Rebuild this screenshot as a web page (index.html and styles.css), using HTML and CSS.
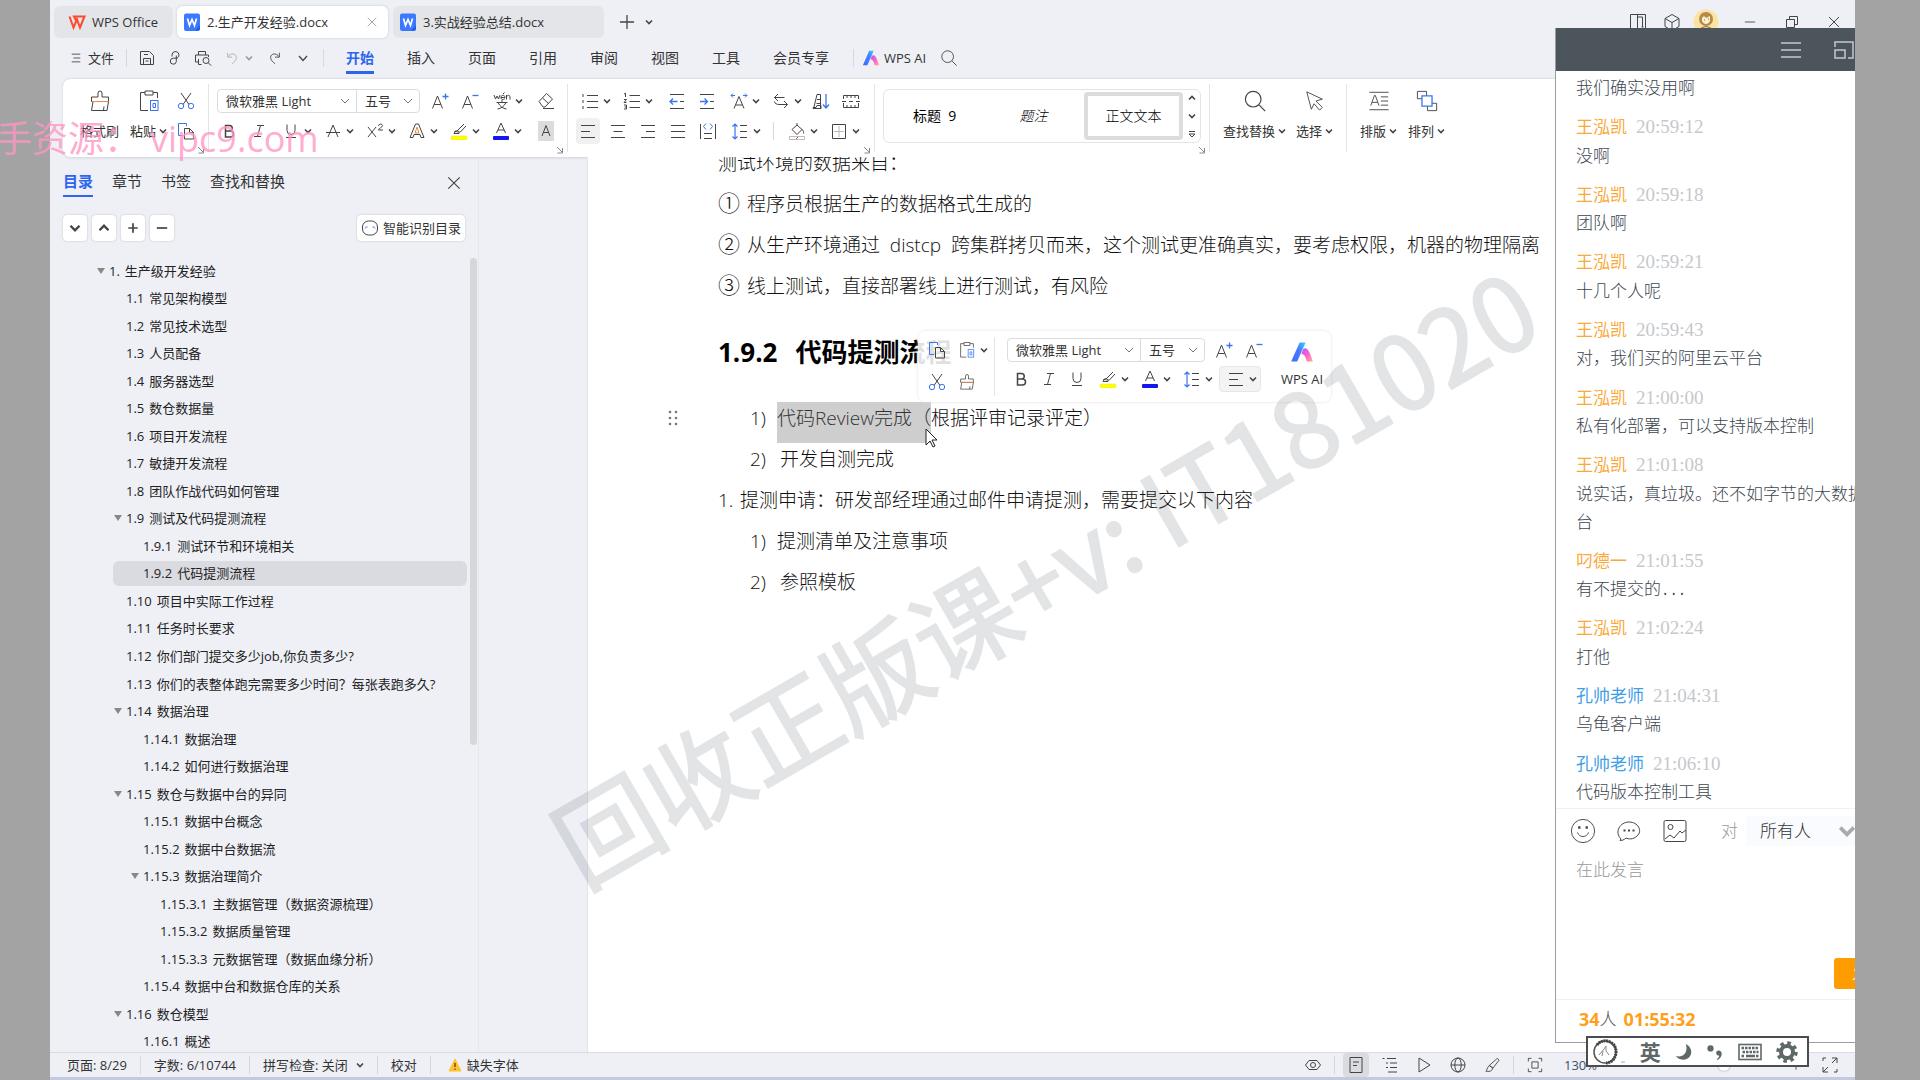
FILE: index.html
```html
<!DOCTYPE html>
<html lang="zh-CN">
<head>
<meta charset="utf-8">
<title>2.生产开发经验.docx - WPS Office</title>
<link rel="stylesheet" href="styles.css">
</head>
<body>
<svg class="sprite" aria-hidden="true">
  <defs>
    <linearGradient id="g-blue" x1="0" y1="1" x2="1" y2="0"><stop offset="0" stop-color="#3b6bff"/><stop offset=".6" stop-color="#4a7dff"/><stop offset="1" stop-color="#35d0ff"/></linearGradient>
    <linearGradient id="g-pink" x1="0" y1="0" x2="1" y2="1"><stop offset="0" stop-color="#a35cff"/><stop offset=".5" stop-color="#ff5fd0"/><stop offset="1" stop-color="#ffb08a"/></linearGradient>
  </defs>
  <symbol id="chev" viewBox="0 0 8 8"><path d="M1 2.5l3 3 3-3" stroke-width="1.6"/></symbol>
  <symbol id="chev-up" viewBox="0 0 8 8"><path d="M1 5.5l3-3 3 3" stroke-width="1.6"/></symbol>
  <symbol id="chev-mid" viewBox="0 0 12 12"><path d="M2 4l4 4.500L10 4" stroke-width="1.3"/></symbol>
  <symbol id="chev-thin" viewBox="0 0 10 10"><path d="M1 3l4 4 4-4" stroke="#777" stroke-width="1"/></symbol>
  <symbol id="more" viewBox="0 0 8 8"><path d="M1 1.5h6M1 4l3 3 3-3z"/></symbol>
  <symbol id="close" viewBox="0 0 14 14"><path d="M2 2l10 10M12 2L2 12"/></symbol>
  <symbol id="corner" viewBox="0 0 8 8"><path d="M1 1l5 5M6.500 2v5h-5" stroke="#888"/></symbol>
  <symbol id="doc" viewBox="0 0 18 18"><path d="M1 2.500A2 2 0 0 1 3 .5h12a2 2 0 0 1 2 2v13.500a2 2 0 0 1-2 2H3a2 2 0 0 1-2-2z" fill="#3b78ff" stroke="none"/><path d="M12 17.500l5-5v3a2 2 0 0 1-2 2z" fill="#1d5cf0" stroke="none"/><path d="M4.500 5.500l2 7 2.500-6 2.500 6 2-7" stroke="#fff" stroke-width="1.700"/></symbol>
  <symbol id="wps" viewBox="0 0 18 14"><path d="M1.500 1.500L5.500 12.500l3.500-8 3 8L16.500 1.500H6l2.500 5" stroke="#fb4a2d" stroke-width="2"/></symbol>
  <symbol id="ai" viewBox="0 0 20 18"><path d="M8 1h5L6 17H1z" fill="url(#g-blue)" stroke="none"/><path d="M11 6.500c3-2 5 1 8 10.500h-5c-1-4-1.500-5.500-4.500-6.500z" fill="url(#g-pink)" stroke="none"/></symbol>
  <symbol id="search" viewBox="0 0 20 20"><circle cx="8.500" cy="8.500" r="6.500"/><path d="M13.500 13.500l5 5"/></symbol>
  <symbol id="burger" viewBox="0 0 12 14"><path d="M1 2.500h10M3 7h8M1 11.500h10"/></symbol>
  <symbol id="save" viewBox="0 0 16 16"><path d="M1.500 1.500h9l4 4v9h-13zM4.500 14.500v-6h7v6M5 4.500h4M6.500 11h3"/></symbol>
  <symbol id="share" viewBox="0 0 16 16"><path d="M5 6.500V5a3.500 3.500 0 1 1 5 3.200H6.500a3 3 0 1 0 2.800 3.300V5.500"/></symbol>
  <symbol id="printer" viewBox="0 0 18 16"><path d="M4.500 5V1.500h7V5M4 12H1.500V5h13v2M4.500 9v5.500h3"/><circle cx="12" cy="10.500" r="3"/><path d="M14.200 12.700l3 3"/></symbol>
  <symbol id="undo" viewBox="0 0 14 16"><path d="M2 2v5h5M2.500 6.500C5 2 12 2.500 12 7.500c0 3-3 5.500-5 7" stroke="#aaa"/></symbol>
  <symbol id="redo" viewBox="0 0 14 16"><path d="M12 2v5H7M11.500 6.500C9 2 2 2.500 2 7.500c0 3 3 5.500 5 7"/></symbol>
  <symbol id="brush" viewBox="0 0 24 24"><path d="M10 8V4a2 2 0 0 1 4 0v4h6.500v4.500h-17V8zM5 12.500L3.500 21.500h15.500l1.500-9M15.500 21.500l.5-4"/><path d="M4 12.500h16.500" stroke="#e8894a"/></symbol>
  <symbol id="paste" viewBox="0 0 24 24"><path d="M8 3.500H3.500v18H11M16 3.500h4.500V9M8 2h8v4H8z"/><rect x="13.500" y="11.500" width="7.500" height="10" stroke="#3b74f0"/><path d="M16 14.500h2.500v4H16z" stroke="#3b74f0"/></symbol>
  <symbol id="cut" viewBox="0 0 18 18"><path d="M4 1l8 11.500M14 1L6 12.500"/><circle cx="4" cy="14" r="2.700" stroke="#3b74f0"/><circle cx="14" cy="14" r="2.700" stroke="#3b74f0"/></symbol>
  <symbol id="copy" viewBox="0 0 18 18"><path d="M6 13.500H1.500v-12h8V4" stroke="#3b74f0"/><path d="M7.500 6.500h5l4 4v6.500h-9zM12.500 6.500v4h4"/></symbol>
  <symbol id="a-plus" viewBox="0 0 18 18"><path d="M1.500 16.500L6.500 4l5 12.500M3.200 12.500h6.600"/><path d="M11.500 4.500h6M14.500 1.500v6" stroke="#3b74f0" stroke-width="1.300"/></symbol>
  <symbol id="a-minus" viewBox="0 0 18 18"><path d="M1.500 16.500L6.500 4l5 12.500M3.200 12.500h6.600"/><path d="M11.500 3.500h6" stroke="#3b74f0" stroke-width="1.300"/></symbol>
  <symbol id="wen" viewBox="0 0 18 18"><path d="M1 3l1.500 4L4 4l1.500 3L7 3M8 5.500h4c0-3-4-3-4 0s3 2 4 1M13.500 7.500V3M13.500 5c1-2.500 3.500-2 3.500 0v2.500M10 2l1.500-1.500M9 8v2.500M3.500 10.500h11M5 10.500c2 4 5 6 8.500 6.500M13 10.500c-2 4-5 6-8.500 6.500"/></symbol>
  <symbol id="eraser" viewBox="0 0 18 18"><path d="M2 9.500l7.500-8 6 5.500-7.500 8H6zM5.500 6l6 5.500M6 16.500h11"/></symbol>
  <symbol id="bold" viewBox="0 0 18 18"><path d="M5.500 3.500h4a2.700 2.700 0 0 1 0 5.500h-4zM5.500 9h5a3 3 0 0 1 0 6h-5z" stroke-width="1.500"/></symbol>
  <symbol id="italic" viewBox="0 0 18 18"><path d="M7 3.500h7M4 14.500h7M10.500 3.500l-3 11"/></symbol>
  <symbol id="underline" viewBox="0 0 18 18"><path d="M5 2.500v6a4 4 0 0 0 8 0v-6M4 15.500h10"/></symbol>
  <symbol id="strike" viewBox="0 0 18 18"><path d="M4 15L9 3l5 12M2 10.500h14"/></symbol>
  <symbol id="super" viewBox="0 0 18 18"><path d="M2 5l8 10M10 5L2 15M12.500 4c0-2.500 4-2.500 4-.3 0 1.300-4 3-4 4.300h4.500"/></symbol>
  <symbol id="a-art" viewBox="0 0 18 18"><path d="M2 15.500L7.500 2h3L16 15.500h-3l-1-3H6l-1 3z"/><path d="M7 11l2-6 2 6z" stroke="#f08b3c"/></symbol>
  <symbol id="marker" viewBox="0 0 18 18"><path d="M4 10l3-1 7-7M8 9l2 1.500 6-6.500M4 11.500l2-3 3 3z"/><rect x="1" y="14" width="16" height="4" rx="1.500" fill="#ffff00" stroke="#e0dc30" stroke-width=".5"/></symbol>
  <symbol id="a-color" viewBox="0 0 18 18"><path d="M4.500 11L9 1l4.500 10M6 8h6"/><rect x="1" y="14" width="16" height="4" rx="1" fill="#1515f0" stroke="none"/></symbol>
  <symbol id="a-shade" viewBox="0 0 18 20"><path d="M1 0h16v20H1z" fill="#dcdcdc" stroke="none"/><path d="M5 15L9 4.500 13 15M6.300 11.500h5.400"/></symbol>
  <symbol id="bullets" viewBox="0 0 18 18"><path d="M6 3.500h11M6 9.500h11M6 15.500h11"/><path d="M1.500 3.500h1M1.500 9.500h1M1.500 15.500h1" stroke-width="3"/></symbol>
  <symbol id="numbers" viewBox="0 0 18 18"><path d="M6.500 3.500H17M6.500 9.500H17M6.500 15.500H17M1 2l1.500-.8V5M1 7.500h2.500L1 10.500h2.500M1 13h2.500v4H1M1.500 15h2"/></symbol>
  <symbol id="outdent" viewBox="0 0 18 18"><path d="M2 2.500h14M2 16.500h14M12 9.500h4"/><path d="M9.500 9.500h-7M5 6.500l-3 3 3 3" stroke="#3b74f0" stroke-width="1.300"/></symbol>
  <symbol id="indent" viewBox="0 0 18 18"><path d="M2 2.500h14M2 16.500h14M12 9.500h4"/><path d="M2 9.500h7M6.500 6.500l3 3-3 3" stroke="#3b74f0" stroke-width="1.300"/></symbol>
  <symbol id="a-wide" viewBox="0 0 18 18"><path d="M4 16.500L9 4.500l5 12M5.500 13h7"/><path d="M1 3.500h4M13 3.500h4M3 1.500l-2 2 2 2M15 1.500l2 2-2 2" stroke="#3b74f0"/></symbol>
  <symbol id="wrap" viewBox="0 0 18 18"><path d="M6 2L2.500 5.500 6 9M2.500 5.500h10M12 9l3.500 3.500L12 16M15.500 12.500H7c-2 0-4.500-1-4.500-3"/></symbol>
  <symbol id="sort" viewBox="0 0 18 18"><path d="M1 15.500h3l1-2h4v3H1zM2 15L5 2.500h3.500v14M5 7.500h3M4.500 11.500h4"/><path d="M14 2v14M11 12.500l3 3.500 3-3.500" stroke="#3b74f0" stroke-width="1.300"/></symbol>
  <symbol id="marks" viewBox="0 0 18 18"><path d="M1.500 7V3.500h15V7M1.500 11v4.500h15V11M5 3.500V6M9 3.500V6M13 3.500V6M5 13v2.500M9 13v2.500M13 13v2.500M0 9.500h4M7 9.500h4M14 9.500h4"/></symbol>
  <symbol id="al-left" viewBox="0 0 18 18"><path d="M2 3.500h14M2 9.500h9M2 15.500h14"/></symbol>
  <symbol id="al-center" viewBox="0 0 18 18"><path d="M2 3.500h14M4.500 9.500h9M2 15.500h14"/></symbol>
  <symbol id="al-right" viewBox="0 0 18 18"><path d="M2 3.500h14M7 9.500h9M2 15.500h14"/></symbol>
  <symbol id="al-just" viewBox="0 0 18 18"><path d="M2 3.500h14M2 9.500h14M2 15.500h14"/></symbol>
  <symbol id="al-dist" viewBox="0 0 18 18"><path d="M1.500 2v15M16.500 2v15M5 11.500h8M5 16.500h8"/><path d="M7 1.500l-2.500 3L7 7.500M11 1.500l2.500 3-2.500 3" stroke="#3b74f0"/></symbol>
  <symbol id="spacing" viewBox="0 0 18 18"><path d="M9 3.500h7M9 9.500h7M9 15.500h7"/><path d="M4 2v15M1.500 4.500L4 2l2.500 2.500M1.500 14.500L4 17l2.500-2.500" stroke="#3b74f0" stroke-width="1.200"/></symbol>
  <symbol id="bucket" viewBox="0 0 18 18"><path d="M4 7.500L9 3l5 4.500-5 5zM9 3V1M14 7.500c2 1 1.500 3 1.500 4"/><path d="M1.500 14.500h15v3h-15z" stroke="#bbb"/><path d="M8 17l2-2" stroke="#e04040"/></symbol>
  <symbol id="borders" viewBox="0 0 18 18"><path d="M2.500 2.500h13v14h-13z"/><path d="M9 4v11M4 9.500h10" stroke="#bbb"/></symbol>
  <symbol id="pointer" viewBox="0 0 24 24"><path d="M3 2l17 8-7 2 7 7-3 3-6-7-3 6z"/></symbol>
  <symbol id="layout" viewBox="0 0 24 24"><path d="M1.500 2.500h21M1.500 21.500h21M3 17l4-11h1l4 11M4.500 13.500h6M14 7.500h8M14 12h8M14 16.500h8"/></symbol>
  <symbol id="arrange" viewBox="0 0 24 24"><path d="M6.500 9.500h-5v-8h10v5M17.500 14.500h5v8h-10v-5"/><path d="M6.500 6.500h11v11h-11z" stroke="#3b74f0" stroke-width="1.400"/></symbol>
  <symbol id="robot" viewBox="0 0 18 18"><rect x="1.500" y="2" width="15" height="14" rx="6"/><path d="M4 9.500c.5-1.500 1.500-2 2.500-1.500M14 9.500c-.5-1.500-1.500-2-2.500-1.500" stroke="#3b74f0"/></symbol>
  <symbol id="plus" viewBox="0 0 14 14"><path d="M7 1.500v11M1.500 7h11"/></symbol>
  <symbol id="minus" viewBox="0 0 14 14"><path d="M1 7h12"/></symbol>
  <symbol id="side" viewBox="0 0 18 18"><path d="M1.500 1.500h15v15h-15zM8.500 1.500v15M8.500 4h5v10M12.500 14h2"/></symbol>
  <symbol id="cube" viewBox="0 0 18 18"><path d="M9 1.500l7 4v8l-7 4-7-4v-8zM2 5.500l7 4 7-4M9 9.500v8"/></symbol>
  <symbol id="avatar" viewBox="0 0 26 26"><circle cx="13" cy="13" r="12.500" fill="#fbe3a2" stroke="none"/><circle cx="13" cy="10" r="7" fill="#b58a4c" stroke="none"/><path d="M9 9l2-2 2 2 4-2v5c-2 4-6 4-8 0z" fill="#fdf0cf" stroke="none"/><path d="M11 11h1M15 10h1M7 20c3-3 9-3 12 0" stroke="#8a6434"/></symbol>
  <symbol id="restore" viewBox="0 0 14 14"><path d="M1.500 4.500h8v8h-8zM4.500 4.500v-3h8v8h-3"/></symbol>
  <symbol id="eye" viewBox="0 0 18 18"><path d="M1.500 9L5 4.500h8L16.500 9 13 13.500H5z"/><circle cx="9" cy="9" r="2.500"/></symbol>
  <symbol id="page" viewBox="0 0 18 18"><path d="M3 1.500h12v15H3zM6 6h6M6 9.500h4"/></symbol>
  <symbol id="outline" viewBox="0 0 18 18"><path d="M1.500 2.500h2M6 2.500h9M5 7h2M9 7h7M5 11.500h2M9 11.500h7M7 16h9"/></symbol>
  <symbol id="play" viewBox="0 0 18 18"><path d="M4 2l11 7-11 7z"/></symbol>
  <symbol id="globe" viewBox="0 0 18 18"><circle cx="9" cy="9" r="7"/><ellipse cx="9" cy="9" rx="3.200" ry="7"/><path d="M2 9h14"/></symbol>
  <symbol id="pen" viewBox="0 0 18 18"><path d="M15 1.500l2 2-7 9-4-3zM6 9.500l4 3c-1 4-5 4-8 3.500 2-1 1-4 4-6.500z"/></symbol>
  <symbol id="fit" viewBox="0 0 18 18"><path d="M1.500 5V1.500H5M13 1.500h3.500V5M16.500 13v3.500H13M5 16.500H1.500V13M5.500 5.500h7v7h-7z"/></symbol>
  <symbol id="expand" viewBox="0 0 18 18"><path d="M11 2h5v5M16 2l-5 5M7 16H2v-5M2 16l5-5M2 5V2h3M16 13v3h-3"/></symbol>
  <symbol id="warn" viewBox="0 0 14 14"><path d="M7 1l6 12H1z" fill="#ffc12e" stroke="#ffc12e"/><path d="M7 5v4M7 10.500v1.200" stroke="#6b4a00" stroke-width="1.400"/></symbol>
  <symbol id="smile" viewBox="0 0 28 28"><circle cx="14" cy="14" r="12.500"/><path d="M8 15.500c2 6 10 6 12 0"/><path d="M10 9v2.500M18 9v2.500" stroke-width="2.500"/></symbol>
  <symbol id="bubble" viewBox="0 0 24 24"><path d="M4 20c-7-7-1-17 8-17s14 9 8 14c-4 4-9 3-11 2-2 2-4 2.500-6 2.500z"/><path d="M6.500 11.500h2M11 11.500h2M15.500 11.500h2" stroke-width="2"/></symbol>
  <symbol id="picture" viewBox="0 0 24 24"><rect x="1" y="1.500" width="22" height="21" rx="1.500"/><circle cx="7.500" cy="8" r="2.500"/><path d="M2 20l5-4 4 3 6-7 2 2 4-3"/></symbol>
</svg>

<main class="app">
  <header class="titlebar">
    <button class="tab tab-home"><svg class="i18 icon"><use href="#wps"/></svg>WPS Office</button>
    <button class="tab tab-doc active"><svg class="i18 icon"><use href="#doc"/></svg><span>2.生产开发经验.docx</span><svg class="i12 icon dim"><use href="#close"/></svg></button>
    <button class="tab tab-doc"><svg class="i18 icon"><use href="#doc"/></svg><span>3.实战经验总结.docx</span></button>
    <button class="new-tab" aria-label="新建"><svg class="i18 icon"><use href="#plus"/></svg></button>
    <button class="tab-list" aria-label="标签列表"><svg class="i8 icon"><use href="#chev"/></svg></button>
    <div class="window-controls">
      <button aria-label="侧栏"><svg class="i18 icon"><use href="#side"/></svg></button>
      <button aria-label="应用"><svg class="i18 icon"><use href="#cube"/></svg></button>
      <button aria-label="账号"><svg class="i26 icon"><use href="#avatar"/></svg></button>
      <button class="wide first" aria-label="最小化"><svg class="i12 icon"><use href="#minus"/></svg></button>
      <button class="wide" aria-label="还原"><svg class="i14 icon"><use href="#restore"/></svg></button>
      <button class="wide" aria-label="关闭"><svg class="i14 icon"><use href="#close"/></svg></button>
    </div>
  </header>

  <nav class="menubar">
    <button class="file"><svg class="i12 icon"><use href="#burger"/></svg>文件</button>
    <i class="sep"></i>
    <div class="quick">
      <button aria-label="保存"><svg class="i16 icon"><use href="#save"/></svg></button>
      <button aria-label="分享"><svg class="i16 icon"><use href="#share"/></svg></button>
      <button aria-label="打印预览"><svg class="i18 icon"><use href="#printer"/></svg></button>
      <button class="undo" aria-label="撤销"><svg class="i14 icon"><use href="#undo"/></svg><svg class="i8 icon dim"><use href="#chev"/></svg></button>
      <button aria-label="恢复"><svg class="i14 icon"><use href="#redo"/></svg></button>
      <button aria-label="更多"><svg class="i12 icon"><use href="#chev-mid"/></svg></button>
    </div>
    <i class="sep"></i>
    <div class="menus">
      <a class="current" href="#">开始</a><a href="#">插入</a><a href="#">页面</a><a href="#">引用</a><a href="#">审阅</a><a href="#">视图</a><a href="#">工具</a><a href="#">会员专享</a>
    </div>
    <i class="sep"></i>
    <button class="ai"><svg class="i18 icon"><use href="#ai"/></svg>WPS AI</button>
    <button class="find" aria-label="搜索"><svg class="i18 icon"><use href="#search"/></svg></button>
  </nav>

  <section class="ribbon" aria-label="功能区">
    <div class="group clip">
      <button class="big"><svg class="i24 icon"><use href="#brush"/></svg><span>格式刷</span></button>
      <button class="big"><svg class="i24 icon"><use href="#paste"/></svg><span>粘贴<svg class="i8 icon"><use href="#chev"/></svg></span></button>
      <div class="rows">
        <button class="tool" aria-label="剪切"><svg class="i18 icon"><use href="#cut"/></svg></button>
        <button class="tool" aria-label="复制"><svg class="i18 icon"><use href="#copy"/></svg></button>
      </div>
      <svg class="i8 icon corner"><use href="#corner"/></svg>
    </div>
    <div class="group font">
      <div class="row">
        <div class="combos">
          <label class="combo family"><select aria-label="字体"><option>微软雅黑 Light</option></select><svg class="i10 icon"><use href="#chev-thin"/></svg></label>
          <label class="combo size"><select aria-label="字号"><option>五号</option></select><svg class="i10 icon"><use href="#chev-thin"/></svg></label>
        </div>
        <button class="tool" aria-label="增大字号"><svg class="i18 icon"><use href="#a-plus"/></svg></button>
        <button class="tool" aria-label="减小字号"><svg class="i18 icon"><use href="#a-minus"/></svg></button>
        <button class="tool drop" aria-label="拼音指南"><svg class="i18 icon"><use href="#wen"/></svg><svg class="i8 icon"><use href="#chev"/></svg></button>
        <button class="tool last" aria-label="清除格式"><svg class="i18 icon"><use href="#eraser"/></svg></button>
      </div>
      <div class="row">
        <button class="tool" aria-label="加粗"><svg class="i18 icon"><use href="#bold"/></svg></button>
        <button class="tool" aria-label="倾斜"><svg class="i18 icon"><use href="#italic"/></svg></button>
        <button class="tool drop" aria-label="下划线"><svg class="i18 icon"><use href="#underline"/></svg><svg class="i8 icon"><use href="#chev"/></svg></button>
        <button class="tool drop" aria-label="删除线"><svg class="i18 icon"><use href="#strike"/></svg><svg class="i8 icon"><use href="#chev"/></svg></button>
        <button class="tool drop" aria-label="上标"><svg class="i18 icon"><use href="#super"/></svg><svg class="i8 icon"><use href="#chev"/></svg></button>
        <button class="tool drop" aria-label="文字效果"><svg class="i18 icon"><use href="#a-art"/></svg><svg class="i8 icon"><use href="#chev"/></svg></button>
        <button class="tool drop" aria-label="突出显示"><svg class="i18 icon"><use href="#marker"/></svg><svg class="i8 icon"><use href="#chev"/></svg></button>
        <button class="tool drop" aria-label="字体颜色"><svg class="i18 icon"><use href="#a-color"/></svg><svg class="i8 icon"><use href="#chev"/></svg></button>
        <button class="tool last" aria-label="字符底纹"><svg class="i20 icon"><use href="#a-shade"/></svg></button>
      </div>
      <svg class="i8 icon corner"><use href="#corner"/></svg>
    </div>
    <div class="group para">
      <div class="row">
        <button class="tool drop" aria-label="项目符号"><svg class="i18 icon"><use href="#bullets"/></svg><svg class="i8 icon"><use href="#chev"/></svg></button>
        <button class="tool drop" aria-label="编号"><svg class="i18 icon"><use href="#numbers"/></svg><svg class="i8 icon"><use href="#chev"/></svg></button>
        <i class="space"></i>
        <button class="tool" aria-label="减少缩进"><svg class="i18 icon"><use href="#outdent"/></svg></button>
        <button class="tool" aria-label="增加缩进"><svg class="i18 icon"><use href="#indent"/></svg></button>
        <button class="tool drop" aria-label="中文版式"><svg class="i18 icon"><use href="#a-wide"/></svg><svg class="i8 icon"><use href="#chev"/></svg></button>
        <button class="tool drop" aria-label="换行"><svg class="i18 icon"><use href="#wrap"/></svg><svg class="i8 icon"><use href="#chev"/></svg></button>
        <button class="tool" aria-label="排序"><svg class="i18 icon"><use href="#sort"/></svg></button>
        <button class="tool" aria-label="编辑标记"><svg class="i18 icon"><use href="#marks"/></svg></button>
      </div>
      <div class="row">
        <button class="tool" aria-label="左对齐"><span class="pressed"><svg class="i18 icon"><use href="#al-left"/></svg></span></button>
        <button class="tool" aria-label="居中"><svg class="i18 icon"><use href="#al-center"/></svg></button>
        <button class="tool" aria-label="右对齐"><svg class="i18 icon"><use href="#al-right"/></svg></button>
        <button class="tool" aria-label="两端对齐"><svg class="i18 icon"><use href="#al-just"/></svg></button>
        <button class="tool" aria-label="分散对齐"><svg class="i18 icon"><use href="#al-dist"/></svg></button>
        <button class="tool drop" aria-label="行距"><svg class="i18 icon"><use href="#spacing"/></svg><svg class="i8 icon"><use href="#chev"/></svg></button>
        <i class="sep"></i>
        <button class="tool drop" aria-label="底纹颜色"><svg class="i18 icon"><use href="#bucket"/></svg><svg class="i8 icon"><use href="#chev"/></svg></button>
        <button class="tool drop" aria-label="边框"><svg class="i18 icon"><use href="#borders"/></svg><svg class="i8 icon"><use href="#chev"/></svg></button>
      </div>
      <svg class="i8 icon corner"><use href="#corner"/></svg>
    </div>
    <div class="group styles">
      <div class="gallery">
        <button class="style">标题&nbsp; 9</button>
        <button class="style caption">题注</button>
        <button class="style chosen">正文文本</button>
        <div class="scroller">
          <button aria-label="上一行"><svg class="i8 icon"><use href="#chev-up"/></svg></button>
          <button aria-label="下一行"><svg class="i8 icon"><use href="#chev"/></svg></button>
          <button aria-label="更多样式"><svg class="i8 icon"><use href="#more"/></svg></button>
        </div>
      </div>
      <svg class="i8 icon corner"><use href="#corner"/></svg>
    </div>
    <div class="group edit">
      <button class="big"><svg class="i24 icon"><use href="#search"/></svg><span>查找替换<svg class="i8 icon"><use href="#chev"/></svg></span></button>
      <button class="big"><svg class="i22 icon"><use href="#pointer"/></svg><span>选择<svg class="i8 icon"><use href="#chev"/></svg></span></button>
    </div>
    <div class="group arrange">
      <button class="big"><svg class="i22 icon"><use href="#layout"/></svg><span>排版<svg class="i8 icon"><use href="#chev"/></svg></span></button>
      <button class="big"><svg class="i22 icon"><use href="#arrange"/></svg><span>排列<svg class="i8 icon"><use href="#chev"/></svg></span></button>
    </div>
  </section>

  <div class="workspace">
    <aside class="outline-pane">
      <div class="pane-tabs">
        <a class="current" href="#">目录</a><a href="#">章节</a><a href="#">书签</a><a href="#">查找和替换</a>
        <button class="bare" aria-label="关闭目录"><svg class="i16 icon"><use href="#close"/></svg></button>
      </div>
      <div class="pane-tools">
        <button aria-label="展开"><svg class="i12 icon heavy"><use href="#chev"/></svg></button>
        <button aria-label="收起"><svg class="i12 icon heavy"><use href="#chev-up"/></svg></button>
        <button aria-label="增加级别"><svg class="i12 icon heavy"><use href="#plus"/></svg></button>
        <button aria-label="减少级别"><svg class="i12 icon heavy"><use href="#minus"/></svg></button>
        <button class="smart"><svg class="i18 icon"><use href="#robot"/></svg>智能识别目录</button>
      </div>
      <div class="toc-wrap">
        <ul class="toc">
          <li class="l1 open"><a href="#"><b>1.</b>生产级开发经验</a></li>
          <li class="l2"><a href="#"><b>1.1</b>常见架构模型</a></li>
          <li class="l2"><a href="#"><b>1.2</b>常见技术选型</a></li>
          <li class="l2"><a href="#"><b>1.3</b>人员配备</a></li>
          <li class="l2"><a href="#"><b>1.4</b>服务器选型</a></li>
          <li class="l2"><a href="#"><b>1.5</b>数仓数据量</a></li>
          <li class="l2"><a href="#"><b>1.6</b>项目开发流程</a></li>
          <li class="l2"><a href="#"><b>1.7</b>敏捷开发流程</a></li>
          <li class="l2"><a href="#"><b>1.8</b>团队作战代码如何管理</a></li>
          <li class="l2 open"><a href="#"><b>1.9</b>测试及代码提测流程</a></li>
          <li class="l3"><a href="#"><b>1.9.1</b>测试环节和环境相关</a></li>
          <li class="l3 here"><a href="#"><b>1.9.2</b>代码提测流程</a></li>
          <li class="l2"><a href="#"><b>1.10</b>项目中实际工作过程</a></li>
          <li class="l2"><a href="#"><b>1.11</b>任务时长要求</a></li>
          <li class="l2"><a href="#"><b>1.12</b>你们部门提交多少job,你负责多少?</a></li>
          <li class="l2"><a href="#"><b>1.13</b>你们的表整体跑完需要多少时间？每张表跑多久?</a></li>
          <li class="l2 open"><a href="#"><b>1.14</b>数据治理</a></li>
          <li class="l3"><a href="#"><b>1.14.1</b>数据治理</a></li>
          <li class="l3"><a href="#"><b>1.14.2</b>如何进行数据治理</a></li>
          <li class="l2 open"><a href="#"><b>1.15</b>数仓与数据中台的异同</a></li>
          <li class="l3"><a href="#"><b>1.15.1</b>数据中台概念</a></li>
          <li class="l3"><a href="#"><b>1.15.2</b>数据中台数据流</a></li>
          <li class="l3 open"><a href="#"><b>1.15.3</b>数据治理简介</a></li>
          <li class="l4"><a href="#"><b>1.15.3.1</b>主数据管理（数据资源梳理）</a></li>
          <li class="l4"><a href="#"><b>1.15.3.2</b>数据质量管理</a></li>
          <li class="l4"><a href="#"><b>1.15.3.3</b>元数据管理（数据血缘分析）</a></li>
          <li class="l3"><a href="#"><b>1.15.4</b>数据中台和数据仓库的关系</a></li>
          <li class="l2 open"><a href="#"><b>1.16</b>数仓模型</a></li>
          <li class="l3"><a href="#"><b>1.16.1</b>概述</a></li>
        </ul>
        <div class="thumb"></div>
      </div>
    </aside>

    <article class="document">
      <p>测试环境的数据来自：</p>
      <p><span class="circled">①</span>程序员根据生产的数据格式生成的</p>
      <p><span class="circled">②</span>从生产环境通过&nbsp; distcp&nbsp; 跨集群拷贝而来，这个测试更准确真实，要考虑权限，机器的物理隔离</p>
      <p><span class="circled">③</span>线上测试，直接部署线上进行测试，有风险</p>
      <h3><span>1.9.2</span>代码提测流程</h3>
      <p class="sub"><span class="num">1)</span><mark>代码Review完成（</mark>根据评审记录评定）</p>
      <p class="sub"><span class="num two">2)</span>开发自测完成</p>
      <p><span class="num top">1.</span>提测申请：研发部经理通过邮件申请提测，需要提交以下内容</p>
      <p class="sub"><span class="num">1)</span>提测清单及注意事项</p>
      <p class="sub"><span class="num two">2)</span>参照模板</p>

      <svg class="grip" viewBox="0 0 10 18"><g fill="#777"><circle cx="2" cy="2" r="1.300"/><circle cx="8" cy="2" r="1.300"/><circle cx="2" cy="8" r="1.300"/><circle cx="8" cy="8" r="1.300"/><circle cx="2" cy="14" r="1.300"/><circle cx="8" cy="14" r="1.300"/></g></svg>

      <div class="float-bar">
        <div class="float-clip">
          <button class="tool" aria-label="复制"><svg class="i18 icon"><use href="#copy"/></svg></button>
          <button class="tool drop" aria-label="粘贴"><svg class="i18 icon"><use href="#paste"/></svg><svg class="i8 icon"><use href="#chev"/></svg></button>
          <button class="tool" aria-label="剪切"><svg class="i18 icon"><use href="#cut"/></svg></button>
          <button class="tool" aria-label="格式刷"><svg class="i18 icon"><use href="#brush"/></svg></button>
        </div>
        <div class="float-font">
          <div class="row">
            <div class="combos">
              <label class="combo family"><select aria-label="字体"><option>微软雅黑 Light</option></select><svg class="i10 icon"><use href="#chev-thin"/></svg></label>
              <label class="combo size"><select aria-label="字号"><option>五号</option></select><svg class="i10 icon"><use href="#chev-thin"/></svg></label>
            </div>
            <button class="tool" aria-label="增大字号"><svg class="i18 icon"><use href="#a-plus"/></svg></button>
            <button class="tool" aria-label="减小字号"><svg class="i18 icon"><use href="#a-minus"/></svg></button>
          </div>
          <div class="row">
            <button class="tool" aria-label="加粗"><svg class="i18 icon"><use href="#bold"/></svg></button>
            <button class="tool" aria-label="倾斜"><svg class="i18 icon"><use href="#italic"/></svg></button>
            <button class="tool" aria-label="下划线"><svg class="i18 icon"><use href="#underline"/></svg></button>
            <button class="tool drop" aria-label="突出显示"><svg class="i18 icon"><use href="#marker"/></svg><svg class="i8 icon"><use href="#chev"/></svg></button>
            <button class="tool drop" aria-label="字体颜色"><svg class="i18 icon"><use href="#a-color"/></svg><svg class="i8 icon"><use href="#chev"/></svg></button>
            <button class="tool drop" aria-label="行距"><svg class="i18 icon"><use href="#spacing"/></svg><svg class="i8 icon"><use href="#chev"/></svg></button>
            <button class="tool drop boxed" aria-label="左对齐"><svg class="i18 icon"><use href="#al-left"/></svg><svg class="i8 icon"><use href="#chev"/></svg></button>
          </div>
        </div>
        <button class="float-ai"><svg class="i24 icon"><use href="#ai"/></svg>WPS AI</button>
      </div>
      <svg class="cursor" viewBox="0 0 14 20"><path d="M1 1v16l4-4 3 6 2-1-3-6h5z" fill="#fff" stroke="#222"/></svg>
    </article>
  </div>

  <footer class="statusbar">
    <span>页面: 8/29</span><i class="sep"></i>
    <span>字数: 6/10744</span><i class="sep"></i>
    <button>拼写检查: 关闭<svg class="i8 icon"><use href="#chev"/></svg></button><i class="sep"></i>
    <button>校对</button><i class="sep"></i>
    <button class="missing"><svg class="i14 icon"><use href="#warn"/></svg>缺失字体</button>
    <div class="views">
      <button class="cell" aria-label="护眼"><svg class="i18 icon"><use href="#eye"/></svg></button><i class="sep"></i>
      <button class="cell" aria-label="页面视图"><span class="on"><svg class="i18 icon"><use href="#page"/></svg></span></button>
      <button class="cell" aria-label="大纲"><svg class="i18 icon"><use href="#outline"/></svg></button>
      <button class="cell" aria-label="阅读"><svg class="i18 icon"><use href="#play"/></svg></button>
      <button class="cell" aria-label="Web 版式"><svg class="i18 icon"><use href="#globe"/></svg></button>
      <button class="cell" aria-label="写作模式"><svg class="i16 icon"><use href="#pen"/></svg></button><i class="sep"></i>
      <button class="cell" aria-label="适合页面"><svg class="i16 icon"><use href="#fit"/></svg></button>
      <span class="zoom">130%</span>
      <input type="range" min="0" max="100" value="69" aria-label="缩放">
      <button class="cell" aria-label="放大"><svg class="i12 icon"><use href="#plus"/></svg></button>
      <button class="cell" aria-label="全屏"><svg class="i18 icon"><use href="#expand"/></svg></button>
    </div>
  </footer>

  <section class="chat" aria-label="聊天">
    <header>
      <svg viewBox="0 0 20 18" class="lines"><path d="M0 2h20M0 9h20M0 16h20"/></svg>
      <svg viewBox="0 0 20 18" class="pop"><path d="M1 6V1h18v16h-5M1 9h10v8H1z"/></svg>
    </header>
    <ul class="messages">
      <li class="text">我们确实没用啊</li>
      <li class="gap"><b>王泓凯</b><time>20:59:12</time></li><li class="text">没啊</li>
      <li class="gap"><b>王泓凯</b><time>20:59:18</time></li><li class="text">团队啊</li>
      <li class="gap"><b>王泓凯</b><time>20:59:21</time></li><li class="text">十几个人呢</li>
      <li class="gap"><b>王泓凯</b><time>20:59:43</time></li><li class="text">对，我们买的阿里云平台</li>
      <li class="gap"><b>王泓凯</b><time>21:00:00</time></li><li class="text">私有化部署，可以支持版本控制</li>
      <li class="gap"><b>王泓凯</b><time>21:01:08</time></li><li class="text">说实话，真垃圾。还不如字节的大数据平<br>台</li>
      <li class="gap"><b>叼德一</b><time>21:01:55</time></li><li class="text">有不提交的<span class="dots">...</span></li>
      <li class="gap"><b>王泓凯</b><time>21:02:24</time></li><li class="text">打他</li>
      <li class="gap"><b class="teacher">孔帅老师</b><time>21:04:31</time></li><li class="text">乌龟客户端</li>
      <li class="gap"><b class="teacher">孔帅老师</b><time>21:06:10</time></li><li class="text">代码版本控制工具</li>
    </ul>
    <div class="chat-tools">
      <button aria-label="表情"><svg class="i26 icon"><use href="#smile"/></svg></button>
      <button aria-label="快捷回复"><svg class="i24 icon"><use href="#bubble"/></svg></button>
      <button aria-label="图片"><svg class="i24 icon"><use href="#picture"/></svg></button>
      <label for="target">对</label>
      <div class="target"><select id="target"><option>所有人</option></select><svg class="i18 icon"><use href="#chev"/></svg></div>
    </div>
    <textarea placeholder="在此发言" aria-label="发言"></textarea>
    <div class="send-row"><button class="send">发送</button></div>
    <div class="online"><b>34</b>人<b class="clock">01:55:32</b></div>
  </section>

  <div class="ime">
    <svg viewBox="0 0 34 28" class="ime-logo"><circle cx="13" cy="14" r="11" fill="none" stroke="#555" stroke-width="1.500"/><path d="M5 7c6-8 20-4 19 8-1 7-6 10-10 10" fill="none" stroke="#444" stroke-width="3" stroke-dasharray="2 .6"/><path d="M7 17l5-6 2-3v5l3 4M11 13l-1 5" fill="none" stroke="#888"/><path d="M29 24h4" stroke="#aaa"/></svg>
    <b>英</b>
    <svg viewBox="0 0 20 20" class="moon"><path d="M12 1c9 4 8 17-3 17.500-4 0-7-2-8-4 8 2 14-4 11-13.500z" fill="#5f6868"/></svg>
    <svg viewBox="0 0 20 20" class="punct"><circle cx="5" cy="6" r="3.500" fill="#5f6868"/><path d="M13 8.500c5-1 7 6 0 10.500l-1-1c2-1.500 3-3 2.500-4-4-.5-4-5-1.500-5.500z" fill="#5f6868"/></svg>
    <svg viewBox="0 0 24 18" class="keys"><rect x="1" y="1.500" width="22" height="15" fill="none" stroke="#5f6868" stroke-width="1.600"/><path d="M3.500 5h17M4.500 9h16" stroke="#5f6868" stroke-width="2.500" stroke-dasharray="2.500 1"/><path d="M3.500 13h2.500M8 13h9M18 13h2.500" stroke="#5f6868" stroke-width="2.500"/></svg>
    <svg viewBox="0 0 22 22" class="gear"><circle cx="11" cy="11" r="6" fill="none" stroke="#5f6868" stroke-width="4"/><circle cx="11" cy="11" r="9" fill="none" stroke="#5f6868" stroke-width="3.500" stroke-dasharray="3.530 3.530"/></svg>
  </div>

  <div class="watermark">回收正版课+v: IT181020</div>
</main>
<div class="promo">手资源：<span>vipc9.com</span></div>
</body>
</html>
```
FILE: styles.css
```css
*, *::before { box-sizing: border-box; }
body {
  margin: 0;
  height: 100vh;
  overflow: hidden;
  background: #a3a3a3;
  color: #333;
  font: 13px/20px "Open Sans", "Noto Sans CJK SC", sans-serif;
}
button, select, textarea { font: inherit; color: inherit; }
button { border: 0; background: none; padding: 0; display: flex; align-items: center; justify-content: center; white-space: nowrap; }
a { color: inherit; text-decoration: none; }
ul { list-style: none; margin: 0; padding: 0; }
.sprite { position: absolute; width: 0; height: 0; }
.icon { flex: none; fill: none; stroke: #444; stroke-width: 1; }
.icon.dim { stroke: #999; }
.icon.heavy { stroke-width: 2; }
.i8 { width: 8px; height: 8px; }
.i10 { width: 10px; height: 10px; }
.i12 { width: 12px; height: 12px; }
.i14 { width: 14px; height: 14px; }
.i16 { width: 16px; height: 16px; }
.i18 { width: 18px; height: 18px; }
.i20 { width: 20px; height: 20px; }
.i22 { width: 22px; height: 22px; }
.i24 { width: 24px; height: 24px; }
.i26 { width: 26px; height: 26px; }
.sep { flex: none; width: 1px; height: 18px; background: #d6d8de; }

.app {
  position: relative;
  display: flex;
  flex-direction: column;
  height: 100vh;
  margin: 0 65px 0 50px;
  overflow: hidden;
  background: #eef0f6;
  border-bottom: 3px solid #c3cadd;
}

/* Title bar */
.titlebar { display: flex; align-items: center; height: 42px; padding: 2px 0 0 4px; }
.tab { height: 32px; border-radius: 6px; background: #e3e5e9; justify-content: flex-start; }
.tab-home { width: 119px; padding-left: 14px; gap: 6px; margin-right: 4px; }
.tab-doc { width: 211px; padding: 0 10px 0 6px; gap: 6px; margin-right: 5px; }
.tab-doc span { flex: 1; text-align: left; }
.tab.active { background: #fff; box-shadow: 0 0 3px #c4c8d0; }
.new-tab { width: 36px; }
.tab-list { width: 8px; }
.bare { width: 18px; }
.window-controls { display: flex; margin-left: auto; }
.window-controls button { width: 34px; height: 32px; }
.window-controls .wide { width: 42px; }
.window-controls .first { margin-left: 6px; }

/* Menu bar */
.menubar { display: flex; align-items: center; height: 36px; padding: 0 20px 4px; font-size: 14px; }
.file { gap: 6px; width: 44px; font-size: 13px; margin-right: 12px; }
.quick { display: flex; align-items: center; padding-left: 6px; width: 196px; }
.quick button { width: 28px; height: 24px; }
.quick .undo { width: 44px; gap: 6px; }
.menus { display: flex; gap: 33px; margin: 0 24px 0 22px; }
.menus a { padding: 6px 0 3px; border-bottom: 3px solid transparent; }
.menus .current, .pane-tabs .current { color: #2b65f0; font-weight: 700; border-color: #2b65f0; }
.ai { gap: 4px; margin-left: 8px; font-size: 13px; }
.find { margin-left: 14px; }

/* Ribbon */
.ribbon { display: flex; height: 79px; margin-left: 13px; background: #fff; border-top: 1px solid #dfe1e6; border-radius: 8px 0 0 8px; box-shadow: 0 1px 3px #cfd2da; position: relative; }
.group { position: relative; flex: none; display: flex; padding: 9px 0; }
.group + .group::before { content: ""; position: absolute; left: 0; top: 5px; bottom: 5px; width: 1px; background: #e4e4e6; }
.corner { position: absolute; right: 3px; bottom: 3px; }
.row { display: flex; align-items: center; height: 26px; }
.font, .para { flex-direction: column; gap: 4px; }
.tool { flex: none; width: 30px; height: 26px; }
.tool.drop { width: 42px; gap: 4px; padding-left: 4px; }
.tool.last { margin-left: auto; }
.space { width: 5px; }
.pressed { display: grid; place-items: center; width: 24px; height: 26px; background: #f0f0f0; border-radius: 4px; }
.big { flex-direction: column; justify-content: space-between; height: 53px; padding-top: 1px; }
.big .i22 { margin: 1px; }
.big span { display: flex; align-items: center; gap: 3px; }
.clip { width: 145px; padding-left: 17px; gap: 11px; }
.rows { display: flex; flex-direction: column; gap: 4px; margin-left: -7px; }
.font { width: 359px; padding-left: 6px; padding-right: 6px; }
.combos { display: flex; height: 24px; margin: 0 5px 0 3px; border: 1px solid #dcdcdf; border-radius: 4px; }
.combo { position: relative; display: flex; align-items: center; width: 138px; padding: 0 6px 0 8px; }
.combo + .combo { width: 63px; border-left: 1px solid #dcdcdf; }
.combo select, .target select { flex: 1; min-width: 0; border: 0; padding: 0; background: none; appearance: none; }
.para { width: 307px; padding-left: 6px; }
.para .sep { margin: 0 6px 0 8px; }
.styles { width: 335px; padding-left: 9px; padding-top: 10px; }
.gallery { display: flex; align-items: center; width: 318px; height: 54px; border: 1px solid #e4e4e6; border-radius: 6px; color: #000; }
.style { width: 100px; height: 48px; font-size: 14px; }
.style:first-child { width: 106px; padding-right: 4px; }
.style.caption { width: 95px; padding-right: 6px; font-style: italic; font-weight: 300; }
.style.chosen { border: 4px solid #dcdcdc; border-radius: 4px; font-weight: 300; }
.scroller { display: flex; flex-direction: column; gap: 10px; width: 17px; align-items: center; }
.edit { width: 137px; padding-left: 14px; gap: 10px; }
.arrange { padding-left: 14px; gap: 11px; }

/* Outline pane */
.workspace { display: flex; flex: 1; min-height: 0; overflow: hidden; }
.outline-pane { display: flex; flex-direction: column; flex: none; width: 537px; padding: 10px 108px 0 13px; background: linear-gradient(90deg, transparent 428px, #e6e8ee 428px, #e6e8ee 429px, transparent 429px); }
.pane-tabs { display: flex; gap: 19px; height: 32px; font-size: 15px; }
.pane-tabs a { padding: 4px 0; height: 30px; border-bottom: 2px solid transparent; }
.pane-tabs .bare { margin: 0 16px 0 auto; }
.pane-tools { display: flex; gap: 5px; padding: 16px 14px 17px 0; }
.pane-tools button { width: 24px; height: 26px; background: #fff; border-radius: 4px; box-shadow: 0 0 2px #bbb; }
.pane-tools .smart { width: 108px; gap: 4px; margin-left: auto; }
.toc-wrap { display: flex; flex: 1; min-height: 0; gap: 3px; overflow: hidden; }
.toc { flex: 1; display: grid; grid-auto-rows: 1fr; margin: -1px 0 -3px; color: #222; }
.toc li { display: flex; align-items: center; }
.toc a { display: flex; align-items: center; flex: 1; height: 25px; border-radius: 6px; white-space: nowrap; }
.toc b { font-weight: 400; margin-right: 5px; }
.l1 { padding-left: 34px; }
.l2, .l3, .l4 { padding-left: 50px; }
.l1 a { padding-left: 12px; }
.l2 a { padding-left: 13px; }
.l3 a { padding-left: 30px; }
.l4 a { padding-left: 47px; }
.toc .open a::before { content: ""; flex: none; width: 8px; margin: 0 4px 0 -12px; border: 4px solid transparent; border-top: 6px solid #888; border-bottom: 0; }
.here a { background: #dadbe0; }
.thumb { width: 7px; height: 487px; margin: 0 2px 0 0; border-radius: 4px; background: #d6d7db; }

/* Document */
.document { position: relative; flex: 1; min-width: 0; padding-left: 130px; background: #fff; color: #111; font-size: 19px; font-weight: 300; white-space: nowrap; border-left: 1px solid #e2e4ea; }
.document p { margin: 0; line-height: 41px; }
.document p:first-child { margin-top: -14px; }
.circled { display: inline-block; width: 29px; font-size: 22px; line-height: 20px; }
.document h3 { margin: 25px 0 26px; font-size: 26px; line-height: 40px; font-weight: 700; color: #000; }
.document h3 span { margin-right: 18px; }
.document .sub { padding-left: 32px; }
.num { display: inline-block; width: 27px; }
.num.two { width: 30px; }
.num.top { width: 22px; }
mark { display: inline-block; padding-bottom: 4px; margin-bottom: -4px; background: linear-gradient(transparent 4px, #cecece 4px); color: #333; }
.grip { position: absolute; left: 80px; top: 253px; width: 10px; height: 18px; }
.cursor { position: absolute; left: 337px; top: 271px; width: 14px; height: 20px; }
.float-bar { position: absolute; left: 330px; top: 174px; display: flex; gap: 12px; width: 413px; height: 71px; padding: 6px 4px; border-radius: 8px; background: rgba(255,255,255,.88); box-shadow: 0 0 3px #ddd; color: #333; font-size: 13px; font-weight: 400; }
.float-clip { display: grid; grid-template-columns: 30px 42px; row-gap: 4px; width: 80px; border-right: 1px solid #e4e4e6; }
.float-clip .drop { padding-left: 0; }
.float-font { display: flex; flex-direction: column; gap: 3px; }
.float-font .combos { margin: 0 4px 0 0; }
.float-font .combo { width: 132px; }
.float-font .combo + .combo { width: 64px; }
.float-font .row + .row .tool:not(.drop) { width: 28px; }
.boxed { background: #f4f4f4; border: 1px solid #e6e6e6; border-radius: 4px; padding-left: 0; margin-left: 2px; }
.float-ai { flex-direction: column; gap: 5px; height: 54px; margin-left: auto; padding-right: 10px; }

/* Status bar */
.statusbar { display: flex; align-items: center; flex: none; height: 25px; padding-left: 17px; border-top: 1px solid #d9dbe2; }
.statusbar > .sep { margin: 0 13px; }
.statusbar button { gap: 8px; }
.statusbar .missing { gap: 5px; padding-left: 4px; }
.views { display: flex; align-items: center; margin-left: auto; padding-right: 8px; }
.views .sep { margin: 0 4px; }
.cell { width: 34px; height: 24px; }
.on { display: grid; place-items: center; width: 26px; height: 24px; background: #dadbe0; border-radius: 4px; }
.zoom { width: 44px; margin-left: 12px; color: #44506a; }
.views input { width: 160px; height: 12px; margin: 0 3px 0 8px; appearance: none; background: linear-gradient(#c8ccd6, #c8ccd6) center / 100% 1px no-repeat; }
.views input::-webkit-slider-thumb { appearance: none; width: 12px; height: 12px; border-radius: 50%; background: #fff; box-shadow: 0 0 2px #888; }

/* Chat window */
.chat { position: absolute; top: 28px; right: 0; bottom: 34px; width: 300px; display: flex; flex-direction: column; overflow: hidden; background: #fff; border-left: 1px solid #9a9da1; border-bottom: 1px solid #9a9da1; font-size: 17px; font-weight: 300; }
.chat header { display: flex; align-items: center; justify-content: flex-end; gap: 33px; flex: none; height: 43px; padding-right: 1px; background: #4c545c; }
.lines, .pop { width: 20px; height: 18px; fill: none; stroke: #c4c9ce; stroke-width: 1.5; }
.messages { flex: 1; display: flex; flex-direction: column; padding: 3px 0 2px 20px; line-height: 28px; color: #3d4650; white-space: nowrap; justify-content: space-between; }
.messages b { font-weight: 400; color: #f9a93a; margin-right: 9px; }
.messages .teacher { color: #3f9ee8; }
.messages .gap { margin-top: 11px; }
.messages li { height: 28px; }
.messages li:has(br) { height: 56px; }
.dots { font: 14px/20px "Liberation Mono", monospace; }
time { font-family: "Liberation Serif", serif; font-size: 19px; line-height: 20px; color: #c6c8cc; }
.chat-tools { display: flex; align-items: center; flex: none; height: 44px; padding-left: 14px; border-top: 1px solid #eef0f5; }
.chat-tools button { width: 26px; margin-right: 20px; }
.chat-tools button + button + button { margin-right: 33px; }
.chat-tools label { color: #999; }
.target { display: flex; align-items: center; flex: 1; height: 30px; margin-left: 8px; padding-left: 14px; background: #f9fbfe; }
.target .icon { stroke: #aaa; margin-right: -1px; }
textarea { flex: none; height: 106px; margin: 0; border: 0; padding: 5px 20px; resize: none; background: none; line-height: 26px; }
textarea::placeholder { color: #999; opacity: 1; }
.send-row { display: flex; justify-content: flex-end; flex: none; height: 42px; overflow: hidden; border-bottom: 1px solid #eef0f5; }
.send { flex: none; width: 70px; height: 31px; margin-right: -49px; border-radius: 3px; background: #ff9d00; color: #fff; }
.online { display: flex; align-items: center; flex: none; height: 42px; padding: 0 0 5px 23px; color: #555; }
.online b { font-weight: 700; font-size: 18px; color: #ff9f1a; }
.clock { margin-left: 7px; }

/* Input method bar */
.ime { position: absolute; right: 46px; bottom: 10px; display: flex; align-items: center; width: 223px; height: 31px; padding: 0 9px 0 4px; justify-content: space-between; background: #fff; border: 2px solid #4a4d50; color: #5f6868; }
.ime b { font-size: 21px; line-height: 26px; }
.ime-logo { width: 34px; height: 28px; }
.moon, .punct { width: 18px; height: 18px; }
.keys { width: 24px; height: 18px; }
.gear { width: 22px; height: 22px; }

/* Overlaid marks */
.watermark { position: absolute; left: 993px; top: 574px; font: 400 103px/120px "Noto Sans CJK SC", sans-serif; color: #59626e; -webkit-text-stroke: 2px #59626e; opacity: .17; white-space: nowrap; transform: translate(-50%, -50%) rotate(-30deg); pointer-events: none; }
.promo { position: absolute; left: -4px; top: 117px; font-size: 36px; line-height: 44px; color: rgba(255,150,195,.8); white-space: nowrap; pointer-events: none; }
.promo span { margin-left: 10px; }
```
